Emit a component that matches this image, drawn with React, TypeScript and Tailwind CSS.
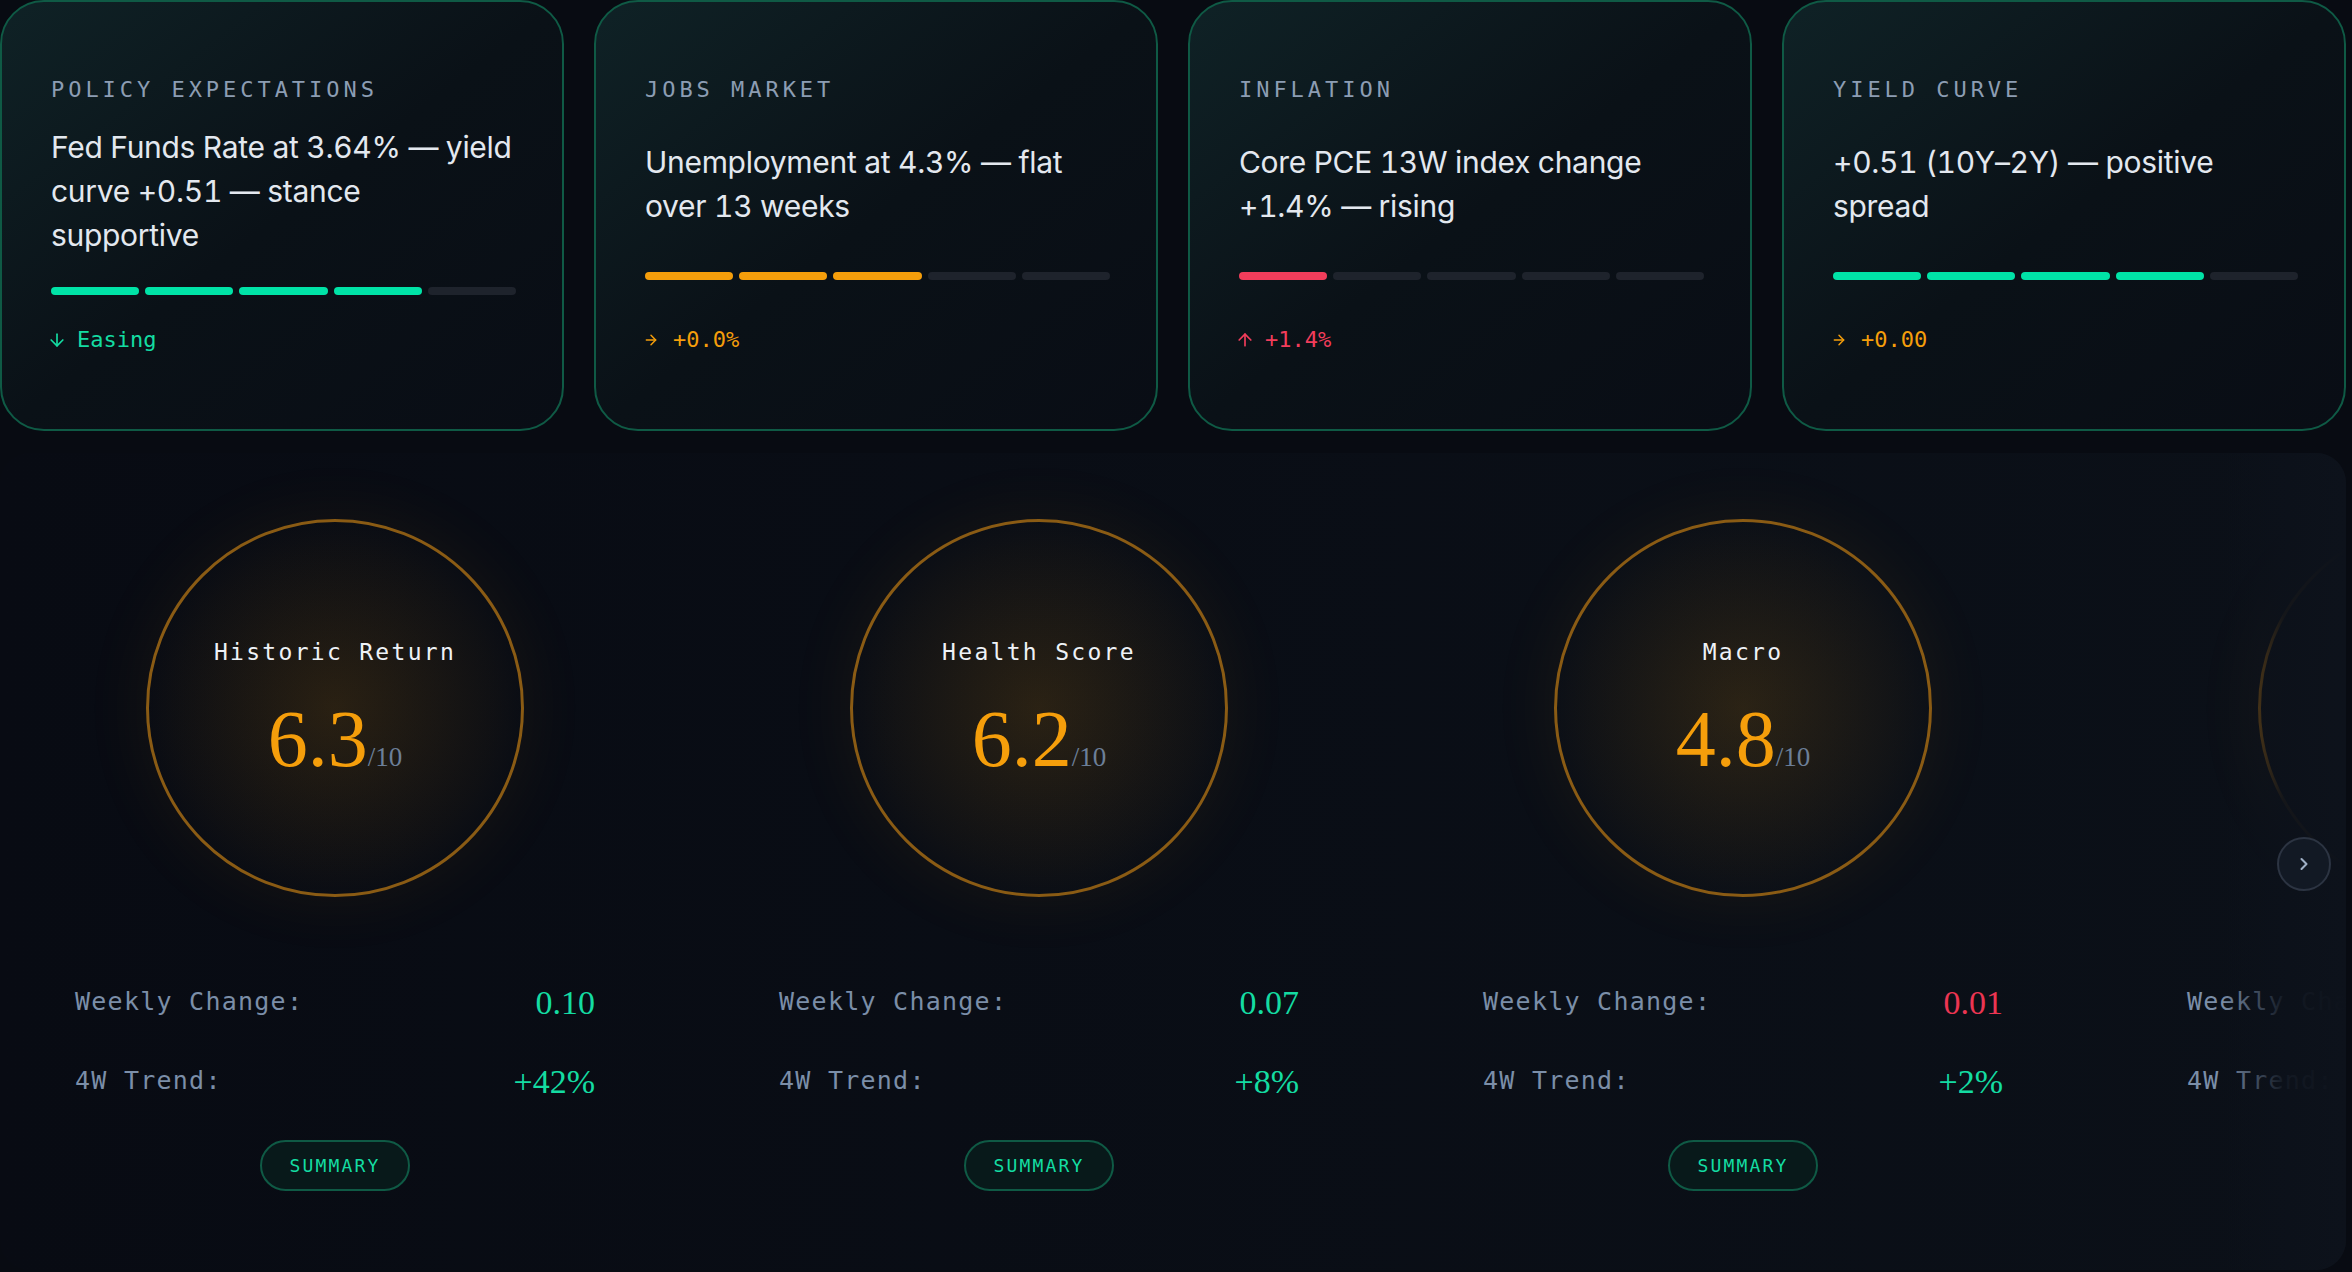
import { ArrowDown, ArrowRight, ArrowUp, ChevronRight } from 'lucide-react';

const MONO = 'font-["DejaVu_Sans_Mono","Liberation_Mono",monospace]';

type Tone = 'green' | 'amber' | 'red';
type Dir = 'down' | 'right' | 'up';

interface Signal {
  label: string;
  text: string;
  filled: number;
  bar: Tone;
  trendTone: Tone;
  dir: Dir;
  trend: string;
}

const SIGNALS: Signal[] = [
  {
    label: 'POLICY EXPECTATIONS',
    text: 'Fed Funds Rate at 3.64% — yield curve +0.51 — stance supportive',
    filled: 4,
    bar: 'green',
    trendTone: 'green',
    dir: 'down',
    trend: 'Easing',
  },
  { label: 'JOBS MARKET', text: 'Unemployment at 4.3% — flat over 13 weeks', filled: 3, bar: 'amber', trendTone: 'amber', dir: 'right', trend: '+0.0%' },
  { label: 'INFLATION', text: 'Core PCE 13W index change +1.4% — rising', filled: 1, bar: 'red', trendTone: 'red', dir: 'up', trend: '+1.4%' },
  { label: 'YIELD CURVE', text: '+0.51 (10Y–2Y) — positive spread', filled: 4, bar: 'green', trendTone: 'amber', dir: 'right', trend: '+0.00' },
];

// bar fill + trend text per tone
const BAR_ON: Record<Tone, string> = {
  green: 'bg-[#00e3a7]',
  amber: 'bg-[#f59e0b]',
  red: 'bg-[#f23d5b]',
};
const TREND_TEXT: Record<Tone, string> = {
  green: 'text-[#14dca2]',
  amber: 'text-[#f59e0b]',
  red: 'text-[#f23d5b]',
};

interface Score {
  name: string;
  value: string;
  weekly: string;
  weeklyUp: boolean;
  trend: string;
}

const SCORES: Score[] = [
  { name: 'Historic Return', value: '6.3', weekly: '0.10', weeklyUp: true, trend: '+42%' },
  { name: 'Health Score', value: '6.2', weekly: '0.07', weeklyUp: true, trend: '+8%' },
  { name: 'Macro', value: '4.8', weekly: '0.01', weeklyUp: false, trend: '+2%' },
  { name: 'Valuation', value: '5.5', weekly: '0.03', weeklyUp: true, trend: '+5%' },
];

function TrendIcon({ dir }: { dir: Dir }) {
  if (dir === 'down') return <ArrowDown size={20} strokeWidth={2} className="-ml-[4px]" />;
  if (dir === 'up') return <ArrowUp size={20} strokeWidth={2} className="-ml-[4px]" />;
  return <ArrowRight size={16} strokeWidth={2.2} className="-ml-[2px] mr-[4px]" />;
}

function SignalCard({ s }: { s: Signal }) {
  return (
    <div className="h-[431px] rounded-[44px] border-2 border-[#0f5a45] bg-gradient-to-br from-[#0f2226] via-[#0a1117] to-[#090d15] pl-[49px] pr-[46px] pt-[72px] pb-[73px] flex flex-col justify-between">
      <div className={`${MONO} text-[22px] leading-[32px] -mb-[10px] tracking-[0.18em] text-[#8c9db3]`}>{s.label}</div>
      <p className="font-['Inter',sans-serif] text-[30px] leading-[44px] tracking-[-0.01em] tabular-nums text-[#e3e8ef]">{s.text}</p>
      <div className="flex gap-[6px]">
        {[0, 1, 2, 3, 4].map((i) => (
          <div key={i} className={`h-[8px] flex-1 rounded-full ${i < s.filled ? BAR_ON[s.bar] : 'bg-[#1e232c]'}`} />
        ))}
      </div>
      <div className={`${MONO} text-[22px] leading-[32px] flex items-center ${TREND_TEXT[s.trendTone]}`}>
        <TrendIcon dir={s.dir} />
        <span className="ml-[10px]">{s.trend}</span>
      </div>
    </div>
  );
}

function ScoreItem({ s }: { s: Score }) {
  return (
    <div className="w-[520px] shrink-0 flex flex-col items-center">
      {/* dial */}
      <div className="w-[378px] h-[378px] rounded-full border-[3px] border-[#8a5b14] bg-[radial-gradient(circle_at_center,rgba(245,158,11,0.14),rgba(245,158,11,0.03)_60%,rgba(10,13,20,0)_75%)] shadow-[0_0_70px_rgba(245,158,11,0.07)] flex flex-col items-center justify-center">
        <div className={`${MONO} text-[23px] leading-[28px] tracking-[0.1em] text-[#eef2f7]`}>{s.name}</div>
        <div className="mt-[33px] flex items-baseline font-['Liberation_Serif',serif]">
          <span className="text-[80px] leading-[80px] text-[#f59e0b]">{s.value}</span>
          <span className="text-[27px] text-[#6c7f98]">/10</span>
        </div>
      </div>

      <div className="w-full mt-[85px]">
        <div className="h-[40px] flex items-center justify-between">
          <span className={`${MONO} text-[25px] tracking-[0.05em] text-[#7b8ea8]`}>Weekly Change:</span>
          <span className={`font-['Liberation_Serif',serif] text-[34px] ${s.weeklyUp ? 'text-[#14dca2]' : 'text-[#ec3552]'}`}>{s.weekly}</span>
        </div>
        <div className="h-[40px] mt-[39px] flex items-center justify-between">
          <span className={`${MONO} text-[25px] tracking-[0.05em] text-[#7b8ea8]`}>4W Trend:</span>
          <span className="font-['Liberation_Serif',serif] text-[34px] text-[#14dca2]">{s.trend}</span>
        </div>
      </div>

      <button className={`mt-[39px] w-[150px] h-[51px] rounded-full border-2 border-[#0f5a45] bg-[#08191a] ${MONO} text-[18px] tracking-[0.12em] text-[#14dca2]`}>
        SUMMARY
      </button>
    </div>
  );
}

export default function App() {
  return (
    <div className="min-h-screen w-[2352px] bg-[#080b12] overflow-hidden">
      <div className="w-[2346px] grid grid-cols-4 gap-[30px]">
        {SIGNALS.map((s) => (
          <SignalCard key={s.label} s={s} />
        ))}
      </div>

      <div className="relative mt-[22px] w-[2346px] h-[817px] rounded-[30px] overflow-hidden bg-gradient-to-r from-[#080b13] to-[#0b1018]">
        <div className="flex gap-[184px] pl-[75px] pt-[66px]">
          {SCORES.map((s) => (
            <ScoreItem key={s.name} s={s} />
          ))}
        </div>

        {/* fade at the right edge */}
        <div className="absolute inset-y-0 right-0 w-[125px] bg-gradient-to-r from-[#0c111a00] via-[#0c111aee] to-[#0d121b]" />

        <button className="absolute right-[15px] top-[384px] w-[54px] h-[54px] rounded-full border-2 border-[#2c3442] bg-[#121924] flex items-center justify-center text-[#9fb0c6]">
          <ChevronRight size={20} strokeWidth={2.5} />
        </button>
      </div>
    </div>
  );
}
